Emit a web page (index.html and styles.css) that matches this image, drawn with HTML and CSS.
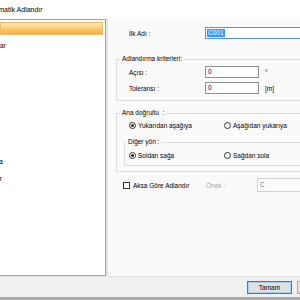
FILE: index.html
```html
<!DOCTYPE html>
<html lang="tr">
<head>
<meta charset="utf-8">
<title>Otomatik Adlandır</title>
<link rel="stylesheet" href="styles.css">
</head>
<body>
<div class="window">
  <div class="titlebar"><span class="title">Otomatik Adlandır</span></div>
  <div class="main">
    <div class="tree">
      <div class="tree-list">
        <div class="item selected"><span class="item-text">Aks</span></div>
        <div class="item"><span class="item-text">Kolonlar</span></div>
        <div class="item"><span class="item-text">Kiriş</span></div>
        <div class="item"><span class="item-text">Kolon</span></div>
        <div class="item"><span class="item-text">Blok</span></div>
        <div class="item"><span class="item-text">Kat</span></div>
        <div class="item"><span class="item-text">Aks</span></div>
        <div class="item"><span class="item-text">Blok</span></div>
        <div class="item"><span class="item-text">Rampa</span></div>
        <div class="item"><span class="item-text">Kirişler</span></div>
      </div>
    </div>
    <div class="splitter"></div>
    <div class="content">
      <div class="name-row">
        <span class="lbl lbl-top">İlk Adı :</span>
        <div class="textbox focused"><span class="sel">C001</span></div>
      </div>
      <fieldset class="group criteria">
        <legend>Adlandırma kriterleri:</legend>
        <div class="frow first">
          <span class="lbl lbl-in">Açısı :</span>
          <div class="textbox short">0</div>
          <span class="unit">°</span>
        </div>
        <div class="frow">
          <span class="lbl lbl-in">Toleransı :</span>
          <div class="textbox short">0</div>
          <span class="unit">[m]</span>
        </div>
      </fieldset>
      <fieldset class="group direction">
        <legend>Ana doğrultu&nbsp; :</legend>
        <div class="rrow outer-row">
          <div class="opt"><span class="radio on"></span><span>Yukarıdan aşağıya</span></div>
          <div class="opt"><span class="radio"></span><span>Aşağıdan yukarıya</span></div>
        </div>
        <fieldset class="group inner">
          <legend>Diğer yön :</legend>
          <div class="rrow inner-row">
            <div class="opt"><span class="radio on"></span><span>Soldan sağa</span></div>
            <div class="opt"><span class="radio"></span><span>Sağdan sola</span></div>
          </div>
        </fieldset>
      </fieldset>
      <div class="chk-row">
        <div class="chk-label"><span class="checkbox"></span><span>Aksa Göre Adlandır</span></div>
        <span class="prefix-lbl">Önek :</span>
        <div class="textbox disabled">C</div>
      </div>
    </div>
  </div>
  <div class="footer">
    <button class="btn default">Tamam</button>
    <button class="btn">İptal</button>
  </div>
  <div class="band"></div>
</div>
</body>
</html>
```
FILE: styles.css
```css
* { box-sizing: border-box; }
html, body { margin: 0; padding: 0; }
body {
  font-family: "Liberation Sans", Arial, sans-serif;
  font-size: 6.5px;
  color: #000;
  background: #fff;
}
.window {
  width: 300px;
  height: 300px;
  overflow: hidden;
  display: flex;
  flex-direction: column;
  background: #fff;
}
.titlebar {
  height: 19px;
  flex: none;
  display: flex;
  align-items: center;
  white-space: nowrap;
  background: #fff;
}
.title { font-size: 7px; margin-left: -13px; }

.main { height: 257px; flex: none; display: flex; }

.tree {
  width: 106px;
  flex: none;
  background: #fff;
  border-top: 1px solid #a3a3a3;
  border-right: 1px solid #a3a3a3;
  border-bottom: 1px solid #a3a3a3;
  padding: 2px 2px 0 0;
  overflow: hidden;
}
.tree-list { display: flex; flex-direction: column; gap: 3.67px; }
.item {
  display: flex;
  align-items: center;
  width: 103px;
  height: 13px;
  white-space: nowrap;
  overflow: visible;
}
.item-text { margin-left: -18px; }
.item.selected {
  background-color: #f8c063;
  background-image: linear-gradient(to bottom, #fde9bb 0%, #fcd98c 40%, #f9c060 60%, #f6b04a 100%);
  box-shadow: inset 0 0 0 1px #efb866;
}

.splitter { width: 2px; flex: none; background: #e3e3e3; }

.content {
  width: 260px;
  flex: none;
  background: #fafafa;
  padding-top: 8px;
}

.name-row { display: flex; align-items: center; height: 12px; }
.lbl { flex: none; width: 76px; }
.lbl-top { margin-left: 21px; }
.lbl-in { margin-left: 9px; }

.textbox {
  height: 12px;
  flex: none;
  border: 1px solid #8f8f8f;
  background: #fff;
  padding-left: 2px;
  line-height: 10px;
  white-space: nowrap;
}
.textbox.focused { width: 120px; border-color: #4d95dc; padding-left: 1px; }
.textbox.short { width: 54px; }
.textbox.disabled {
  width: 60px;
  height: 14px;
  line-height: 12px;
  border-color: #d2d2d2;
  background: #fbfbfb;
  color: #7a7a7a;
}
.sel { background: #3399ff; color: #fff; padding: 0 1px; display: inline-block; line-height: 8px; }
.unit { margin-left: 6px; }

.group {
  margin: 16px 10px 0 8px;
  padding: 0 0 6px 3px;
  border: 1px solid #dcdcdc;
  min-width: 0;
}
.group legend { padding: 0 2px; line-height: 8px; }
.frow { display: flex; align-items: center; height: 12px; margin-top: 4px; }
.frow.first { margin-top: 3px; }

.direction { margin-top: 8px; padding-bottom: 5px; }
.rrow { display: flex; align-items: center; height: 10px; }
.outer-row { margin-top: 3px; margin-left: 9px; }
.inner { margin: 8px 10px 0 4px; padding: 0 0 5px 1px; }
.inner-row { margin-top: 4px; margin-left: 3px; }
.opt { width: 95px; flex: none; display: flex; align-items: center; white-space: nowrap; }
.radio {
  width: 7px;
  height: 7px;
  margin-right: 2px;
  border: 1px solid #333;
  border-radius: 50%;
  background: #fff;
  display: flex;
  align-items: center;
  justify-content: center;
  flex: none;
}
.radio.on::after {
  content: "";
  width: 3px;
  height: 3px;
  border-radius: 50%;
  background: #222;
}

.chk-row { display: flex; align-items: center; height: 14px; margin-top: 6px; }
.chk-label { width: 83px; margin-left: 15px; display: flex; align-items: center; white-space: nowrap; flex: none; }
.checkbox {
  width: 7px;
  height: 7px;
  margin-right: 3px;
  border: 1px solid #333;
  background: #fff;
  flex: none;
}
.prefix-lbl { width: 51px; flex: none; color: #a6a6a6; }

.footer {
  height: 21px;
  flex: none;
  background: #f0f0f0;
  border-top: 1px solid #e3e3e3;
  display: flex;
  align-items: flex-start;
  gap: 5px;
  padding: 4px 0 0 247px;
}
.btn {
  width: 45px;
  height: 13px;
  flex: none;
  margin: 0;
  padding: 0;
  border: 1px solid #adadad;
  background: #e1e1e1;
  font-family: inherit;
  font-size: 6.5px;
  line-height: 11px;
  color: #000;
}
.btn.default { border-color: #2f7fd0; box-shadow: inset 0 0 0 1px #a9cdf1; }
.band { height: 3px; flex: none; background: #a9a9a9; }
```
